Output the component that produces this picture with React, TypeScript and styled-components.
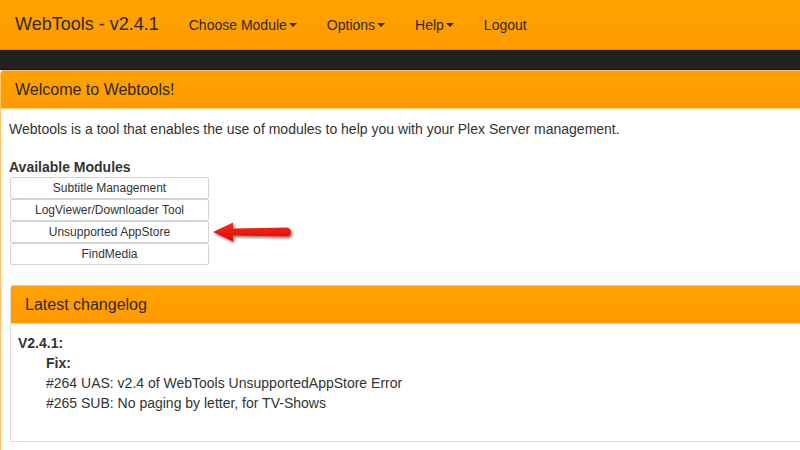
import styled, { createGlobalStyle } from 'styled-components'

const NAV_ITEMS = [
  { label: 'Choose Module', caret: true },
  { label: 'Options', caret: true },
  { label: 'Help', caret: true },
  { label: 'Logout', caret: false },
]

const MODULES = ['Subtitle Management', 'LogViewer/Downloader Tool', 'Unsupported AppStore', 'FindMedia']

const Arrow = () => (
  <svg width="90" height="28" viewBox="0 0 90 28">
    <defs>
      <filter id="sh" x="-10%" y="-30%" width="130%" height="170%">
        <feDropShadow dx="1.5" dy="2" stdDeviation="1.2" floodColor="#000" floodOpacity="0.45" />
      </filter>
      <linearGradient id="rg" x1="0" y1="0" x2="0" y2="1">
        <stop offset="0" stopColor="#ff2a1a" />
        <stop offset="1" stopColor="#d90c00" />
      </linearGradient>
    </defs>
    <path
      d="M1 11 L21 1.5 L21 7.5 L74 6.5 Q79 6.5 79 11 Q79 15.5 74 15.5 L21 14.5 L21 20.5 Z"
      fill="url(#rg)"
      filter="url(#sh)"
    />
  </svg>
)

const App = () => {
  return (
    <>
      <GlobalStyle />
      <NAVBAR>
        <BRAND>WebTools - v2.4.1</BRAND>
        {NAV_ITEMS.map((item) => (
          <NAV_LINK key={item.label}>
            {item.label}
            {item.caret && <CARET />}
          </NAV_LINK>
        ))}
      </NAVBAR>
      <STRIP />
      <PANEL $wide>
        <PANEL_HEADING $pad={14}>Welcome to Webtools!</PANEL_HEADING>
        <WELCOME_BODY>
          <p>Webtools is a tool that enables the use of modules to help you with your Plex Server management.</p>
          <MODULES_TITLE>Available Modules</MODULES_TITLE>
          <MODULE_LIST>
            {MODULES.map((m) => (
              <MODULE_BUTTON key={m}>
                {m}
                {m === 'Unsupported AppStore' && (
                  <ARROW_WRAP>
                    <Arrow />
                  </ARROW_WRAP>
                )}
              </MODULE_BUTTON>
            ))}
          </MODULE_LIST>
          <PANEL>
            <PANEL_HEADING $pad={14}>Latest changelog</PANEL_HEADING>
            <CHANGELOG_BODY>
              <VERSION>V2.4.1:</VERSION>
              <INDENT>
                <VERSION>Fix:</VERSION>
                <div>#264 UAS: v2.4 of WebTools UnsupportedAppStore Error</div>
                <div>#265 SUB: No paging by letter, for TV-Shows</div>
              </INDENT>
            </CHANGELOG_BODY>
          </PANEL>
        </WELCOME_BODY>
      </PANEL>
    </>
  )
}

export default App

const GlobalStyle = createGlobalStyle`
  html, body {
    margin: 0;
    padding: 0;
    background: #ffffff;
    overflow: hidden;
  }
  body {
    font-family: "Liberation Sans", Arial, sans-serif;
    color: #333;
    width: 800px;
    height: 450px;
  }
  p {
    margin: 0;
  }
`

const NAVBAR = styled.nav`
  height: 50px;
  display: flex;
  align-items: center;
  background: linear-gradient(to bottom, #ffa300, #ff9b00);
  border-bottom: 1px solid #e38800;
  box-sizing: border-box;
  color: #2e2a22;
`

const BRAND = styled.div`
  font-size: 18px;
  padding: 0 15px 0 15px;
`

const NAV_LINK = styled.div`
  font-size: 14px;
  padding: 0 15px;
  display: flex;
  align-items: center;
`

const CARET = styled.span`
  display: inline-block;
  width: 0;
  height: 0;
  margin-left: 2px;
  margin-top: 1px;
  border-top: 4px solid #2e2a22;
  border-left: 4px solid transparent;
  border-right: 4px solid transparent;
`

const STRIP = styled.div`
  height: 19px;
  background: #222222;
  border-bottom: 1px solid #111;
`

const PANEL = styled.section<{ $wide?: boolean }>`
  margin-left: ${({ $wide }) => ($wide ? '0' : '1px')};
  width: calc(100% + 20px);
  border: 1px solid ${({ $wide }) => ($wide ? '#ffc46b' : '#dddddd')};
  border-top-left-radius: 4px;
  background: #fff;
  box-sizing: border-box;
`

const PANEL_HEADING = styled.div<{ $pad: number }>`
  height: 37px;
  display: flex;
  align-items: center;
  padding: 0 ${({ $pad }) => $pad}px;
  font-size: 16px;
  color: #2e2a22;
  background: linear-gradient(to bottom, #ffa200, #ff9a00);
  border-top: 1px solid #ffc46b;
  border-bottom: 1px solid #ffd08a;
  border-top-left-radius: 3px;
  margin-top: -1px;
`

const WELCOME_BODY = styled.div`
  padding: 10px 8px 8px 8px;
  font-size: 14px;
  line-height: 20px;
`

const MODULES_TITLE = styled.div`
  font-weight: bold;
  margin-top: 18px;
`

const MODULE_LIST = styled.div`
  width: 199px;
  margin-left: 1px;
  margin-bottom: 20px;
  display: flex;
  flex-direction: column;
`

const MODULE_BUTTON = styled.div`
  position: relative;
  height: 22px;
  box-sizing: border-box;
  border: 1px solid #d4d4d4;
  border-radius: 2px;
  font-size: 12px;
  line-height: 20px;
  text-align: center;
  color: #333;
  background: #fff;
`

const ARROW_WRAP = styled.div`
  position: absolute;
  left: 201px;
  top: -1px;
  line-height: 0;
`

const CHANGELOG_BODY = styled.div`
  padding: 9px 7px 28px 7px;
  font-size: 14px;
  line-height: 20px;
`

const VERSION = styled.div`
  font-weight: bold;
`

const INDENT = styled.div`
  padding-left: 28px;
`
